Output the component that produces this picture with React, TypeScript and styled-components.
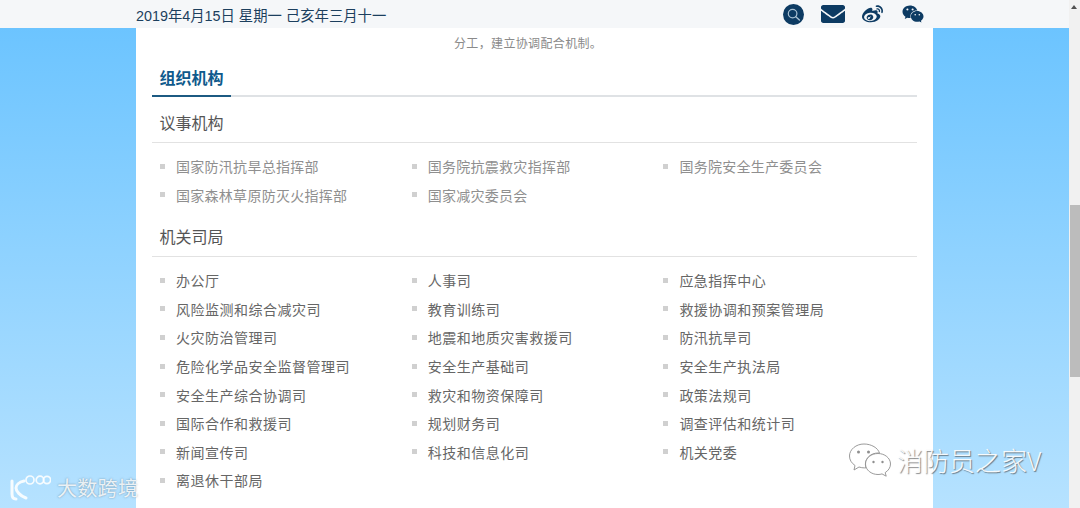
import React from 'react';
import styled, { createGlobalStyle } from 'styled-components';
import { FaEnvelope, FaWeibo, FaWeixin } from 'react-icons/fa';

const GlobalStyle = createGlobalStyle`
  html, body {
    margin: 0;
    padding: 0;
    overflow: hidden;
    background: #fff;
  }
`;

const cjk = `"Noto Sans CJK SC", "Liberation Sans", sans-serif`;

const Page = styled.div`
  position: relative;
  width: 1080px;
  height: 508px;
  display: flex;
  overflow: hidden;
  font-family: ${cjk};
`;

const Viewport = styled.div`
  width: 1069px;
  display: flex;
  flex-direction: column;
`;

const TopBar = styled.div`
  height: 28px;
  flex: none;
  background: #f5f7f9;
  display: flex;
  align-items: center;
  padding-left: 136px;
`;

const DateText = styled.div`
  width: 636px;
  font-family: "Liberation Sans", ${cjk};
  font-size: 14.35px;
  color: #1c3f5e;
  white-space: nowrap;
`;

const Tools = styled.div`
  display: flex;
  align-items: center;
  color: #0d3b63;
`;

const ToolSlot = styled.div<{ $width: number }>`
  width: ${p => p.$width}px;
  height: 28px;
  display: flex;
  align-items: center;
  justify-content: center;
`;

const Backdrop = styled.div`
  flex: 1;
  background: linear-gradient(180deg, #6cc4ff 0%, #b6e2ff 100%);
  padding-left: 136px;
`;

const Panel = styled.div`
  width: 797px;
  height: 100%;
  box-sizing: border-box;
  background: #fff;
  padding: 0 16px;
`;

const Intro = styled.div`
  height: 30px;
  line-height: 30px;
  padding-left: 302px;
  font-size: 12px;
  letter-spacing: 0.35px;
  color: #8a8a8a;
  white-space: nowrap;
`;

const MainTitleRow = styled.div`
  height: 37px;
  border-bottom: 2px solid #dfe2e5;
  display: flex;
`;

const MainTitle = styled.div`
  width: 79px;
  height: 39px;
  box-sizing: border-box;
  border-bottom: 2px solid #1c5a82;
  padding-left: 7.500px;
  line-height: 38px;
  font-size: 16px;
  font-weight: 700;
  color: #0f5a8c;
`;

const SectionTitle = styled.div`
  height: 46px;
  box-sizing: border-box;
  border-bottom: 1px solid #e2e2e2;
  padding-left: 7.500px;
  line-height: 50px;
  font-size: 16px;
  color: #555;
`;

const LinkGrid = styled.ul`
  list-style: none;
  margin: 0;
  padding: 9px 0 2px;
  display: grid;
  grid-template-columns: repeat(3, 251.7px);
  grid-auto-rows: 28.55px;
`;

const LinkItem = styled.li<{ $muted?: boolean }>`
  display: flex;
  align-items: center;
  padding-left: 8px;
  font-size: 14px;
  letter-spacing: ${p => (p.$muted ? '0.28px' : '0.5px')};
  color: ${p => (p.$muted ? '#8f8f8f' : '#666')};
  white-space: nowrap;
  &:before {
    content: '';
    width: 5px;
    height: 5px;
    margin-right: 11px;
    background: #d0d0d0;
  }
`;

const Scrollbar = styled.div`
  width: 11px;
  background: #f1f1f1;
  position: relative;
`;

const ArrowUp = styled.div`
  position: absolute;
  top: 5px;
  left: 2px;
  width: 0;
  height: 0;
  border-left: 3.5px solid transparent;
  border-right: 3.5px solid transparent;
  border-bottom: 4px solid #505050;
`;

const Thumb = styled.div`
  position: absolute;
  top: 205px;
  left: 1px;
  width: 10px;
  height: 172px;
  background: #bcbcbc;
`;

const WatermarkLeft = styled.div`
  position: absolute;
  left: 9px;
  top: 473px;
  display: flex;
  align-items: center;
  gap: 6px;
  color: rgba(255, 255, 255, 0.85);
  font-size: 20px;
  line-height: 30px;
  letter-spacing: 0.3px;
  text-shadow: 0 0 2px rgba(80, 110, 130, 0.7);
`;

const WatermarkRight = styled.div`
  position: absolute;
  left: 848px;
  top: 442px;
  display: flex;
  align-items: center;
  gap: 5px;
  color: rgba(255, 255, 255, 0.92);
  font-size: 26px;
  font-weight: 300;
  line-height: 36px;
  text-shadow: 1px 1px 1px rgba(70, 70, 70, 0.65);
`;

const councils = [
  '国家防汛抗旱总指挥部',
  '国务院抗震救灾指挥部',
  '国务院安全生产委员会',
  '国家森林草原防灭火指挥部',
  '国家减灾委员会',
];

const bureaus = [
  '办公厅', '人事司', '应急指挥中心',
  '风险监测和综合减灾司', '教育训练司', '救援协调和预案管理局',
  '火灾防治管理司', '地震和地质灾害救援司', '防汛抗旱司',
  '危险化学品安全监督管理司', '安全生产基础司', '安全生产执法局',
  '安全生产综合协调司', '救灾和物资保障司', '政策法规司',
  '国际合作和救援司', '规划财务司', '调查评估和统计司',
  '新闻宣传司', '科技和信息化司', '机关党委',
  '离退休干部局',
];

const SearchIcon = () => (
  <svg width="21" height="21" viewBox="0 0 21 21">
    <circle cx="10.5" cy="10.5" r="10.5" fill="#0d3b63" />
    <circle cx="9.6" cy="9.6" r="4.3" fill="none" stroke="#a9c0d2" strokeWidth="1.2" />
    <path d="M12.8 12.8L16.4 16" stroke="#a9c0d2" strokeWidth="1.4" strokeLinecap="round" />
  </svg>
);

const KLogo = () => (
  <svg width="42" height="26" viewBox="0 0 42 26" fill="none" stroke="rgba(255,255,255,0.88)">
    <path d="M3 6v13c0 3 1.500 5 4 5" strokeWidth="3" strokeLinecap="round" />
    <path d="M15 6c-5 1-8 4-8 7s4 8 10 10" strokeWidth="3" strokeLinecap="round" />
    <circle cx="21" cy="5" r="4" strokeWidth="1.7" />
    <circle cx="31" cy="5" r="3.8" strokeWidth="1.7" />
    <circle cx="38" cy="5" r="3.6" strokeWidth="1.7" />
  </svg>
);

const ChatLogo = () => (
  <svg width="44" height="36" viewBox="0 0 44 36" fill="rgba(255,255,255,0.85)" stroke="#8f8f8f" strokeWidth="0.9">
    <path d="M16 2C8 2 1.500 7.500 1.500 14c0 4 2 7 5.500 9.500L6 28l5-3c2 .6 3.500 .9 5.500 .9 .5 0 1 0 1.500-.1-.4-1.200-.6-2.400-.6-3.600C17.400 16 23 11 30 11c.5 0 1 0 1.500 .1C30 6 23.500 2 16 2z" />
    <path d="M42.500 22c0-6-5.800-10.500-12.500-10.500S17.500 16 17.500 22 23.300 32.500 30 32.500c1.400 0 2.800-.2 4-.6l4.200 2.300-1-3.600C40.500 28.500 42.500 25.500 42.500 22z" />
    <g fill="#8f8f8f" stroke="none">
      <circle cx="10.500" cy="10" r="1.500" />
      <circle cx="20.500" cy="10" r="1.500" />
      <circle cx="25.500" cy="20" r="1.200" />
      <circle cx="34.500" cy="20" r="1.200" />
    </g>
  </svg>
);

export default function App() {
  return (
    <>
      <GlobalStyle />
      <Page>
        <Viewport>
          <TopBar>
            <DateText>2019年4月15日 星期一 己亥年三月十一</DateText>
            <Tools>
              <ToolSlot $width={42}><SearchIcon /></ToolSlot>
              <ToolSlot $width={38}><FaEnvelope size={24} /></ToolSlot>
              <ToolSlot $width={41}><FaWeibo size={21} /></ToolSlot>
              <ToolSlot $width={40}><FaWeixin size={22} /></ToolSlot>
            </Tools>
          </TopBar>
          <Backdrop>
            <Panel>
              <Intro>分工，建立协调配合机制。</Intro>
              <MainTitleRow>
                <MainTitle>组织机构</MainTitle>
              </MainTitleRow>
              <SectionTitle>议事机构</SectionTitle>
              <LinkGrid>
                {councils.map(name => (
                  <LinkItem key={name} $muted>{name}</LinkItem>
                ))}
              </LinkGrid>
              <SectionTitle>机关司局</SectionTitle>
              <LinkGrid>
                {bureaus.map(name => (
                  <LinkItem key={name}>{name}</LinkItem>
                ))}
              </LinkGrid>
            </Panel>
          </Backdrop>
        </Viewport>
        <Scrollbar>
          <ArrowUp />
          <Thumb />
        </Scrollbar>
        <WatermarkLeft>
          <KLogo />
          <span>大数跨境</span>
        </WatermarkLeft>
        <WatermarkRight>
          <ChatLogo />
          <span>消防员之家V</span>
        </WatermarkRight>
      </Page>
    </>
  );
}
